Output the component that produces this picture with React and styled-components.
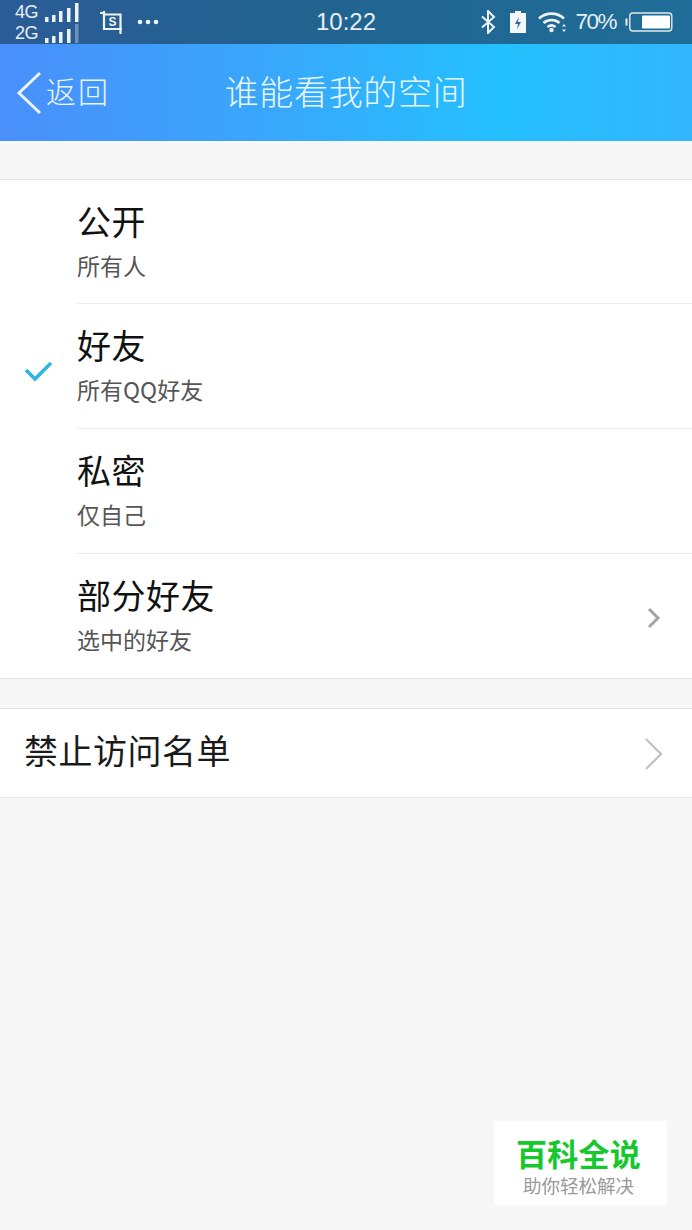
import React from "react";
import styled, { createGlobalStyle } from "styled-components";

const FONT = `"Noto Sans CJK SC", "Noto Sans", sans-serif`;

const GlobalStyle = createGlobalStyle`
  html, body {
    margin: 0;
    padding: 0;
    background: #f7f7f7;
  }
  body {
    font-family: ${FONT};
  }
`;

const Page = styled.div`
  position: relative;
  width: 692px;
  height: 1230px;
  overflow: hidden;
  background: #f7f7f7;
`;

const StatusBar = styled.div`
  height: 44px;
  display: flex;
  align-items: center;
  justify-content: space-between;
  padding: 0 19px 0 15px;
  box-sizing: border-box;
  background: linear-gradient(90deg, #2b5c97 0%, #22628f 40%, #1f6d98 100%);
  color: #e8f0f5;
`;

const StatusSide = styled.div`
  display: flex;
  align-items: center;
  width: 250px;
  justify-content: ${(props) => (props.$right ? "flex-end" : "flex-start")};
`;

const Clock = styled.div`
  margin-left: 4px;
  font: 400 24px "Liberation Sans", Arial, sans-serif;
  color: #e6eef3;
`;

const Signals = styled.div`
  display: flex;
  flex-direction: column;
  gap: 1px;
  margin-right: 21px;
`;

const SignalRow = styled.div`
  display: flex;
  align-items: flex-end;
  height: 20px;
  gap: 7px;
  font: 400 18px/20px "Liberation Sans", Arial, sans-serif;
  letter-spacing: -0.5px;
`;

const Percent = styled.span`
  font: 400 22.5px "Liberation Sans", Arial, sans-serif;
  letter-spacing: -1.5px;
  margin: 0 9px 0 7px;
  color: #e6eef3;
`;

const NavBar = styled.div`
  position: relative;
  height: 97px;
  display: flex;
  align-items: center;
  justify-content: center;
  background: linear-gradient(90deg, #4a8ffb 0%, #38a8fb 40%, #24c0fe 72%, #33b6fc 100%);
  color: #eaf6ff;
`;

const Back = styled.div`
  position: absolute;
  left: 16px;
  top: 21px;
  display: flex;
  align-items: center;
  gap: 3px;
  font-size: 30px;
  font-weight: 300;
  line-height: 42px;
  letter-spacing: 2px;
`;

const BackArrow = styled.svg`
  margin-top: 6px;
`;

const Title = styled.div`
  margin-top: -4px;
  font-size: 34px;
  line-height: 48px;
  letter-spacing: 0.7px;
  font-weight: 300;
`;

const Group = styled.div`
  margin-top: ${(props) => props.$top}px;
  background: #fff;
  border-top: 1px solid #e4e4e4;
  border-bottom: 1px solid #e4e4e4;
`;

const Option = styled.div`
  position: relative;
  height: ${(props) => (props.$first ? 123 : 125)}px;
  box-sizing: border-box;
  margin-left: 77px;
  padding-top: 18px;
  border-top: ${(props) => (props.$first ? "none" : "1px solid #ececec")};
`;

const OptionName = styled.div`
  font-size: 34px;
  line-height: 46px;
  letter-spacing: 0.5px;
  color: #111;
`;

const OptionHint = styled.div`
  margin-top: 5px;
  font-size: 23px;
  line-height: 32px;
  color: #555;
`;

const CheckMark = styled.svg`
  position: absolute;
  left: -53px;
  top: 56px;
`;

const Arrow = styled.svg`
  position: absolute;
  right: ${(props) => props.$right}px;
  top: ${(props) => props.$top}px;
`;

const PlainRow = styled.div`
  position: relative;
  height: 88px;
  padding: 17px 0 0 24px;
  box-sizing: border-box;
  font-size: 34px;
  line-height: 48px;
  letter-spacing: 0.5px;
  color: #1a1a1a;
`;

const Watermark = styled.div`
  position: absolute;
  left: 494px;
  top: 1121px;
  width: 173px;
  height: 84px;
  padding: 15px 4px 0 0;
  box-sizing: border-box;
  display: flex;
  flex-direction: column;
  align-items: center;
  background: #fff;
`;

const BrandName = styled.div`
  font-size: 31px;
  line-height: 34px;
  font-weight: 700;
  letter-spacing: 0.3px;
  color: #16c72e;
`;

const BrandSlogan = styled.div`
  margin-top: 3px;
  font-size: 18.5px;
  line-height: 24px;
  color: #999;
`;

function SignalBars({ dimLast }) {
  const bars = [
    { x: 0, h: 5 },
    { x: 7, h: 7 },
    { x: 14, h: 11 },
    { x: 22, h: 14 },
    { x: 30, h: 19 },
  ];
  return (
    <svg width="34" height="20" viewBox="0 0 34 20">
      {bars.map((bar, i) => (
        <rect
          key={bar.x}
          x={bar.x}
          y={20 - bar.h}
          width="3.500"
          height={bar.h}
          fill="#eef3f7"
          opacity={dimLast && i === 4 ? 0.35 : 1}
        />
      ))}
    </svg>
  );
}

function ScreenshotIcon() {
  return (
    <svg width="26" height="23" viewBox="0 0 26 23" fill="none" stroke="#eef3f7">
      <path d="M0 2h4M4 0v18h18M4 3.500h16.500V23" strokeWidth="2.200" />
      <text x="8.500" y="15" fontSize="12" fill="#eef3f7" stroke="none" fontFamily="Liberation Sans" fontWeight="700">
        S
      </text>
    </svg>
  );
}

function Dots() {
  return (
    <svg width="22" height="6" viewBox="0 0 22 6" style={{ marginLeft: 11 }}>
      <circle cx="3" cy="3" r="2.300" fill="#eef3f7" />
      <circle cx="11" cy="3" r="2.300" fill="#eef3f7" />
      <circle cx="19" cy="3" r="2.300" fill="#eef3f7" />
    </svg>
  );
}

function BluetoothIcon() {
  return (
    <svg width="16" height="24" viewBox="0 0 16 24" fill="none" stroke="#eef3f7" strokeWidth="2">
      <path d="M2 6.500l12 10.500-6 6V1l6 6-12 10.500" />
    </svg>
  );
}

function ChargeIcon() {
  return (
    <svg width="16" height="22" viewBox="0 0 16 22" style={{ marginLeft: 14 }}>
      <path d="M0 2h5V0h6v2h5v20H0z" fill="#f4f7f9" />
      <path d="M9 6l-4 7h3l-1 5 4-7H8z" fill="#2a6d94" />
    </svg>
  );
}

function WifiIcon() {
  return (
    <svg width="30" height="22" viewBox="0 0 30 22" fill="none" stroke="#eef3f7" style={{ marginLeft: 12 }}>
      <path d="M1 7.500C8 1 19 1 26 7.500" strokeWidth="2.600" />
      <path d="M5.500 12c4.500-4 11.500-4 16 0" strokeWidth="2.600" />
      <path d="M9.500 16c2.500-2 5.500-2 8 0" strokeWidth="2.600" />
      <circle cx="13.500" cy="19" r="2.200" fill="#eef3f7" stroke="none" />
      <path d="M26 13l2 2.500h-4zM26 21l2-2.500h-4z" fill="#eef3f7" stroke="none" />
    </svg>
  );
}

function BatteryIcon() {
  return (
    <svg width="48" height="20" viewBox="0 0 48 20">
      <path d="M1.500 6.500v7" stroke="#eef3f7" strokeWidth="2" />
      <rect x="4.800" y="1" width="42" height="18" rx="3" fill="none" stroke="#dfe9ef" strokeWidth="1.400" />
      <rect x="17" y="3.500" width="28" height="13" rx="1" fill="#fff" />
    </svg>
  );
}

function App() {
  const options = [
    { name: "公开", hint: "所有人" },
    { name: "好友", hint: "所有QQ好友", checked: true },
    { name: "私密", hint: "仅自己" },
    { name: "部分好友", hint: "选中的好友", arrow: true },
  ];

  return (
    <Page>
      <GlobalStyle />
      <StatusBar>
        <StatusSide>
          <Signals>
            <SignalRow>
              4G
              <SignalBars />
            </SignalRow>
            <SignalRow>
              2G
              <SignalBars dimLast />
            </SignalRow>
          </Signals>
          <ScreenshotIcon />
          <Dots />
        </StatusSide>
        <Clock>10:22</Clock>
        <StatusSide $right>
          <BluetoothIcon />
          <ChargeIcon />
          <WifiIcon />
          <Percent>70%</Percent>
          <BatteryIcon />
        </StatusSide>
      </StatusBar>

      <NavBar>
        <Back>
          <BackArrow width="27" height="44" viewBox="0 0 27 44" fill="none" stroke="#eaf6ff" strokeWidth="3">
            <path d="M24 2L3 22l21 20" />
          </BackArrow>
          返回
        </Back>
        <Title>谁能看我的空间</Title>
      </NavBar>

      <Group $top={38}>
        {options.map((item, i) => (
          <Option key={item.name} $first={i === 0}>
            {item.checked && (
              <CheckMark width="30" height="22" viewBox="0 0 30 22" fill="none" stroke="#2fb4e4" strokeWidth="3.600">
                <path d="M2 10l9 9L27 3" />
              </CheckMark>
            )}
            <OptionName>{item.name}</OptionName>
            <OptionHint>{item.hint}</OptionHint>
            {item.arrow && (
              <Arrow $right={31} $top={53} width="14" height="22" viewBox="0 0 14 22" fill="none" stroke="#a5a5a5" strokeWidth="3">
                <path d="M2 2l9 9-9 9" />
              </Arrow>
            )}
          </Option>
        ))}
      </Group>

      <Group $top={29}>
        <PlainRow>
          禁止访问名单
          <Arrow $right={28} $top={28} width="20" height="34" viewBox="0 0 20 34" fill="none" stroke="#c4c4c4" strokeWidth="2.400">
            <path d="M2 2l15 15L2 32" />
          </Arrow>
        </PlainRow>
      </Group>

      <Watermark>
        <BrandName>百科全说</BrandName>
        <BrandSlogan>助你轻松解决</BrandSlogan>
      </Watermark>
    </Page>
  );
}

export default App;
